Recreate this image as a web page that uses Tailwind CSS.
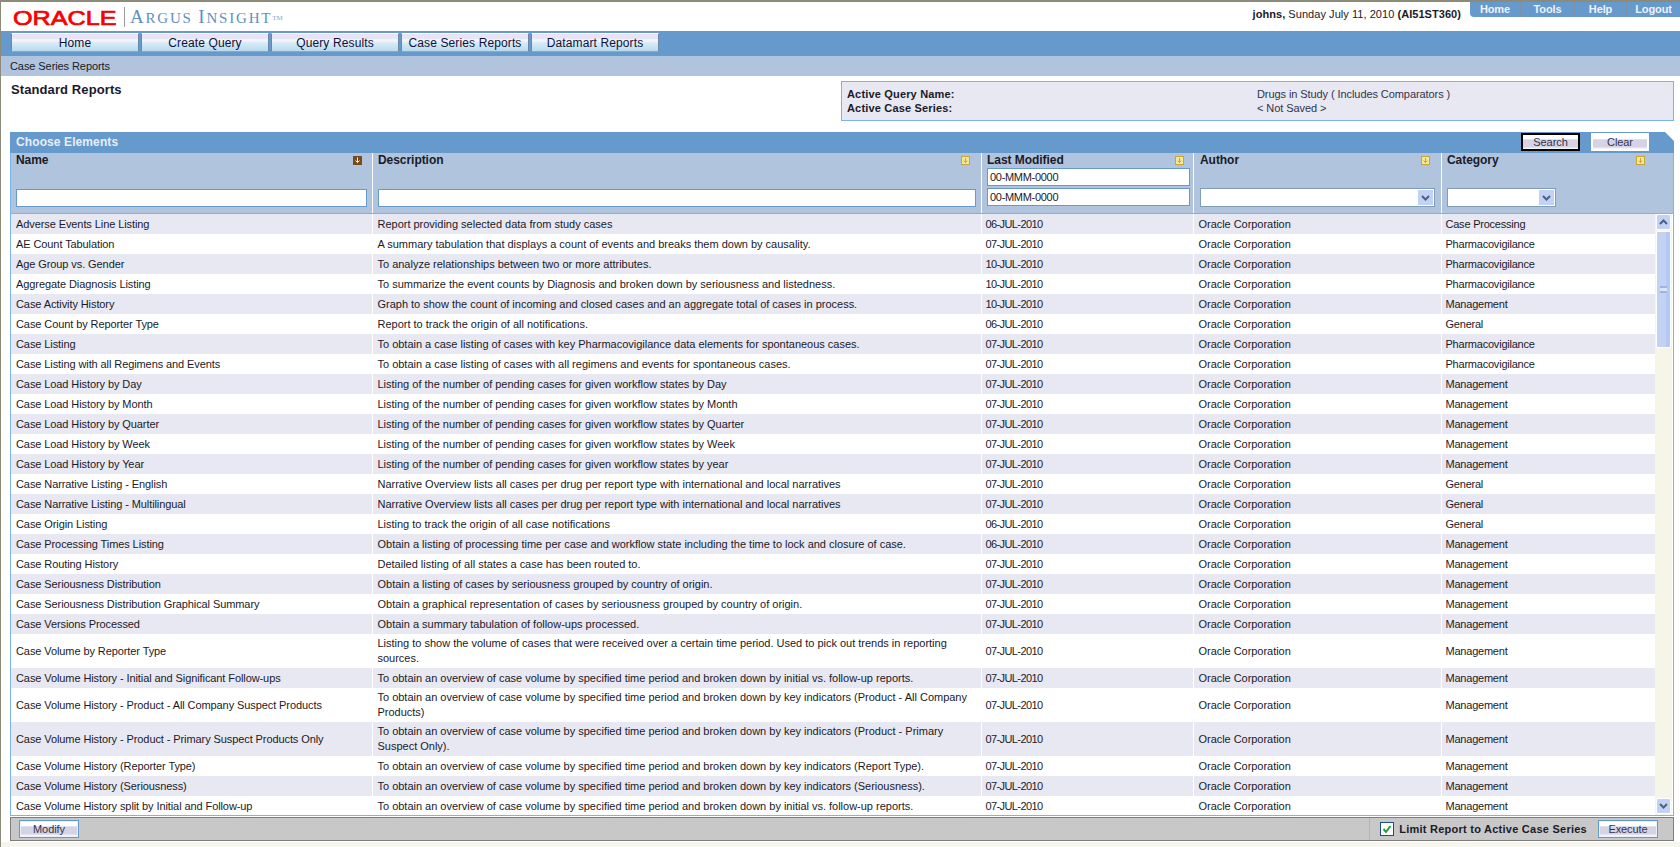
<!DOCTYPE html>
<html lang="en">
  <head>
    <meta charset="UTF-8" />
    <title>Argus Insight - Case Series Reports</title>
    <script src="https://cdn.jsdelivr.net/npm/@tailwindcss/browser@4"></script>
  </head>
  <body class="h-[847px] overflow-hidden bg-white border-t-2 border-l border-[#8c8a78] font-['Liberation_Sans',Arial,sans-serif] text-[11px] tracking-[-0.08px] text-[#1a1a28]">
    <!-- Header -->
    <div class="flex h-[29px] justify-between">
      <div class="flex items-start pl-[12px]">
        <span class="mt-[6px] w-[108px] origin-left scale-x-[1.26] text-[20px] leading-[20px] tracking-normal text-[#f80000] [-webkit-text-stroke:0.7px_#f80000]">ORACLE</span>
        <span class="mt-[5px] ml-[3px] h-[20px] w-px bg-[#9a9a9a]"></span>
        <span class="mt-[5px] ml-[5px] font-['Liberation_Serif',serif] text-[15px] leading-[20px] tracking-[1.8px] text-[#5f90c0]"><span class="text-[19px]">A</span>RGUS <span class="text-[19px]">I</span>NSIGHT<sup class="text-[7px] tracking-normal text-[#8aa8c8]">TM</sup></span>
      </div>
      <div class="flex items-start">
        <span class="mt-[5px] mr-[9px] text-[11px] leading-[14px] tracking-[0.05px]"><b>johns,</b> Sunday July 11, 2010 <b>(AI51ST360)</b></span>
        <div class="flex h-[15px] w-[210px] rounded-bl-[4px] bg-[#6699cc] text-[11px] leading-[14px] font-bold tracking-[-0.1px] text-[#eef3fa]">
          <a class="w-[51px] border-r border-[#7f8fa5] text-center">Home</a>
          <a class="w-[54px] border-r border-[#7f8fa5] text-center">Tools</a>
          <a class="w-[52px] border-r border-[#7f8fa5] text-center">Help</a>
          <a class="w-[53px] text-center">Logout</a>
        </div>
      </div>
    </div>

    <!-- Main navigation -->
    <nav class="flex h-[25px] items-start gap-[2px] bg-[#6699cc] pt-[2px] pl-[10px] text-[12px] tracking-[0.12px] text-[#10103a]">
      <a class="h-[19px] w-[128px] border border-x-[#6f86a6] border-t-white border-b-[#8fa8c0] bg-[linear-gradient(#e9e3f6_0,#e9e3f6_25%,#f6f8fb_35%,#d5eaf6_55%,#b9d9ee_100%)] text-center leading-[19px]">Home</a>
      <a class="h-[19px] w-[128px] border border-x-[#6f86a6] border-t-white border-b-[#8fa8c0] bg-[linear-gradient(#e9e3f6_0,#e9e3f6_25%,#f6f8fb_35%,#d5eaf6_55%,#b9d9ee_100%)] text-center leading-[19px]">Create Query</a>
      <a class="h-[19px] w-[128px] border border-x-[#6f86a6] border-t-white border-b-[#8fa8c0] bg-[linear-gradient(#e9e3f6_0,#e9e3f6_25%,#f6f8fb_35%,#d5eaf6_55%,#b9d9ee_100%)] text-center leading-[19px]">Query Results</a>
      <a class="h-[19px] w-[128px] border border-x-[#6f86a6] border-t-white border-b-[#8fa8c0] bg-[linear-gradient(#e9e3f6_0,#e9e3f6_25%,#f6f8fb_35%,#d5eaf6_55%,#b9d9ee_100%)] text-center leading-[19px]">Case Series Reports</a>
      <a class="h-[19px] w-[128px] border border-x-[#6f86a6] border-t-white border-b-[#8fa8c0] bg-[linear-gradient(#e9e3f6_0,#e9e3f6_25%,#f6f8fb_35%,#d5eaf6_55%,#b9d9ee_100%)] text-center leading-[19px]">Datamart Reports</a>
    </nav>
    <div class="h-[20px] bg-[#b0c4de] pl-[9px] leading-[20px]">Case Series Reports</div>

    <!-- Title and active query -->
    <div class="flex h-[56px] justify-between pt-[5px] pr-[6px] pl-[10px]">
      <h1 class="pt-[1px] text-[13px] leading-[16px] font-bold tracking-[0.1px]">Standard Reports</h1>
      <div class="flex h-[40px] w-[833px] border border-[#7ab2f2] bg-[#e8e8f2] pt-[5px] leading-[14px]">
        <div class="w-[415px] pl-[5px] text-[11px] font-bold tracking-[0.17px]">
          <p>Active Query Name:</p>
          <p>Active Case Series:</p>
        </div>
        <div class="text-[#33334a]">
          <p>Drugs in Study ( Includes Comparators )</p>
          <p>&lt; Not Saved &gt;</p>
        </div>
      </div>
    </div>

    <!-- Choose Elements panel -->
    <div class="mr-[6px] ml-[9px]">
      <div class="flex h-[21px] items-start justify-between bg-[#6699cc] pr-[25px] pl-[6px] [clip-path:polygon(0_0,calc(100%-9px)_0,100%_9px,100%_100%,0_100%)]">
        <span class="text-[12px] leading-[20px] font-bold tracking-[0.1px] text-[#e8eef8]">Choose Elements</span>
        <div class="mt-px flex gap-[11px]">
          <button class="h-[18px] w-[59px] border-2 border-black bg-[linear-gradient(#fff_0,#fff_25%,#d5d3e4_35%,#d5d3e4_85%,#fff_100%)] text-[11px] leading-[13px] text-[#333350]">Search</button>
          <button class="h-[18px] w-[58px] border-2 border-white bg-[linear-gradient(#fff_0,#fff_25%,#d5d3e4_35%,#d5d3e4_85%,#fff_100%)] text-[11px] leading-[13px] text-[#333350]">Clear</button>
        </div>
      </div>

      <!-- Column headers and filters -->
      <div class="flex h-[61px] border-x border-b border-[#7ab2f2] bg-[#b0c4de] text-[12px] leading-[15px] font-bold tracking-[-0.05px]">
        <div class="relative w-[362px] border-r border-white pl-[5px]">
          Name
          <svg class="absolute top-[3px] right-[10px] h-[9px] w-[9px]" viewBox="0 0 9 9"><rect width="9" height="9" fill="#7a4a1c" /><path d="M4.5 1.5v5M2.5 4.5l2 2 2-2" stroke="#fff" fill="none" /></svg>
          <input class="absolute top-[36px] left-[5px] h-[18px] w-[351px] border border-[#6699cc] bg-white" />
        </div>
        <div class="relative w-[609px] border-r border-white pl-[5px]">
          Description
          <svg class="absolute top-[3px] right-[11px] h-[9px] w-[9px]" viewBox="0 0 9 9"><rect x=".5" y=".5" width="8" height="8" fill="#f6e792" stroke="#c8a53a" /><path d="M4.5 2v4.5M2.7 4.7l1.8 1.8 1.8-1.8" stroke="#c8a53a" fill="none" /></svg>
          <input class="absolute top-[36px] left-[5px] h-[18px] w-[598px] border border-[#6699cc] bg-white" />
        </div>
        <div class="relative w-[212px] border-r border-white pl-[5px]">
          Last Modified
          <svg class="absolute top-[3px] right-[9px] h-[9px] w-[9px]" viewBox="0 0 9 9"><rect x=".5" y=".5" width="8" height="8" fill="#f6e792" stroke="#c8a53a" /><path d="M4.5 2v4.5M2.7 4.7l1.8 1.8 1.8-1.8" stroke="#c8a53a" fill="none" /></svg>
          <input value="00-MMM-0000" class="absolute top-[15px] left-[5px] h-[18px] w-[203px] border border-[#6699cc] bg-white pl-[2px] text-[11px] font-normal tracking-[-0.3px]" />
          <input value="00-MMM-0000" class="absolute top-[35px] left-[5px] h-[18px] w-[203px] border border-[#6699cc] bg-white pl-[2px] text-[11px] font-normal tracking-[-0.3px]" />
        </div>
        <div class="relative w-[248px] border-r border-white pl-[6px]">
          Author
          <svg class="absolute top-[3px] right-[11px] h-[9px] w-[9px]" viewBox="0 0 9 9"><rect x=".5" y=".5" width="8" height="8" fill="#f6e792" stroke="#c8a53a" /><path d="M4.5 2v4.5M2.7 4.7l1.8 1.8 1.8-1.8" stroke="#c8a53a" fill="none" /></svg>
          <div class="absolute top-[35px] left-[6px] flex h-[19px] w-[235px] justify-end border border-[#7f9db9] bg-white p-px">
            <span class="flex w-[15px] items-center justify-center bg-[#c1d2f5]"><svg class="h-[6px] w-[9px]" viewBox="0 0 9 6"><path d="M1 1l3.5 3.5L8 1" stroke="#4d6185" stroke-width="2" fill="none" /></svg></span>
          </div>
        </div>
        <div class="relative flex-1 pl-[5px]">
          Category
          <svg class="absolute top-[3px] right-[28px] h-[9px] w-[9px]" viewBox="0 0 9 9"><rect x=".5" y=".5" width="8" height="8" fill="#f6e792" stroke="#c8a53a" /><path d="M4.5 2v4.5M2.7 4.7l1.8 1.8 1.8-1.8" stroke="#c8a53a" fill="none" /></svg>
          <div class="absolute top-[35px] left-[5px] flex h-[19px] w-[109px] justify-end border border-[#7f9db9] bg-white p-px">
            <span class="flex w-[15px] items-center justify-center bg-[#c1d2f5]"><svg class="h-[6px] w-[9px]" viewBox="0 0 9 6"><path d="M1 1l3.5 3.5L8 1" stroke="#4d6185" stroke-width="2" fill="none" /></svg></span>
          </div>
        </div>
      </div>

      <!-- Report list -->
      <div class="flex h-[602px] overflow-hidden border-x border-b border-[#7ab2f2]">
        <table class="w-[1644px] table-fixed self-start leading-[15px] [&_td]:h-[20px] [&_td]:px-[5px] [&_td]:py-[2px] [&_td+td]:border-l [&_td+td]:border-white [&_td:nth-child(1)]:tracking-[-0.09px] [&_td:nth-child(2)]:tracking-[-0.01px] [&_td:nth-child(3)]:pl-[4px] [&_td:nth-child(3)]:tracking-[-0.6px] [&_td:nth-child(4)]:tracking-[-0.04px] [&_td:nth-child(5)]:pl-[4px] [&_td:nth-child(5)]:tracking-[-0.22px] [&_tr:nth-child(odd)]:bg-[#e8e8f2]">
          <colgroup>
            <col class="w-[361px]" />
            <col class="w-[609px]" />
            <col class="w-[212px]" />
            <col class="w-[248px]" />
            <col class="w-[214px]" />
          </colgroup>
          <tbody>
            <tr><td>Adverse Events Line Listing</td><td>Report providing selected data from study cases</td><td>06-JUL-2010</td><td>Oracle Corporation</td><td>Case Processing</td></tr>
            <tr><td>AE Count Tabulation</td><td>A summary tabulation that displays a count of events and breaks them down by causality.</td><td>07-JUL-2010</td><td>Oracle Corporation</td><td>Pharmacovigilance</td></tr>
            <tr><td>Age Group vs. Gender</td><td>To analyze relationships between two or more attributes.</td><td>10-JUL-2010</td><td>Oracle Corporation</td><td>Pharmacovigilance</td></tr>
            <tr><td>Aggregate Diagnosis Listing</td><td>To summarize the event counts by Diagnosis and broken down by seriousness and listedness.</td><td>10-JUL-2010</td><td>Oracle Corporation</td><td>Pharmacovigilance</td></tr>
            <tr><td>Case Activity History</td><td>Graph to show the count of incoming and closed cases and an aggregate total of cases in process.</td><td>10-JUL-2010</td><td>Oracle Corporation</td><td>Management</td></tr>
            <tr><td>Case Count by Reporter Type</td><td>Report to track the origin of all notifications.</td><td>06-JUL-2010</td><td>Oracle Corporation</td><td>General</td></tr>
            <tr><td>Case Listing</td><td>To obtain a case listing of cases with key Pharmacovigilance data elements for spontaneous cases.</td><td>07-JUL-2010</td><td>Oracle Corporation</td><td>Pharmacovigilance</td></tr>
            <tr><td>Case Listing with all Regimens and Events</td><td>To obtain a case listing of cases with all regimens and events for spontaneous cases.</td><td>07-JUL-2010</td><td>Oracle Corporation</td><td>Pharmacovigilance</td></tr>
            <tr><td>Case Load History by Day</td><td>Listing of the number of pending cases for given workflow states by Day</td><td>07-JUL-2010</td><td>Oracle Corporation</td><td>Management</td></tr>
            <tr><td>Case Load History by Month</td><td>Listing of the number of pending cases for given workflow states by Month</td><td>07-JUL-2010</td><td>Oracle Corporation</td><td>Management</td></tr>
            <tr><td>Case Load History by Quarter</td><td>Listing of the number of pending cases for given workflow states by Quarter</td><td>07-JUL-2010</td><td>Oracle Corporation</td><td>Management</td></tr>
            <tr><td>Case Load History by Week</td><td>Listing of the number of pending cases for given workflow states by Week</td><td>07-JUL-2010</td><td>Oracle Corporation</td><td>Management</td></tr>
            <tr><td>Case Load History by Year</td><td>Listing of the number of pending cases for given workflow states by year</td><td>07-JUL-2010</td><td>Oracle Corporation</td><td>Management</td></tr>
            <tr><td>Case Narrative Listing - English</td><td>Narrative Overview lists all cases per drug per report type with international and local narratives</td><td>07-JUL-2010</td><td>Oracle Corporation</td><td>General</td></tr>
            <tr><td>Case Narrative Listing - Multilingual</td><td>Narrative Overview lists all cases per drug per report type with international and local narratives</td><td>07-JUL-2010</td><td>Oracle Corporation</td><td>General</td></tr>
            <tr><td>Case Origin Listing</td><td>Listing to track the origin of all case notifications</td><td>06-JUL-2010</td><td>Oracle Corporation</td><td>General</td></tr>
            <tr><td>Case Processing Times Listing</td><td>Obtain a listing of processing time per case and workflow state including the time to lock and closure of case.</td><td>06-JUL-2010</td><td>Oracle Corporation</td><td>Management</td></tr>
            <tr><td>Case Routing History</td><td>Detailed listing of all states a case has been routed to.</td><td>07-JUL-2010</td><td>Oracle Corporation</td><td>Management</td></tr>
            <tr><td>Case Seriousness Distribution</td><td>Obtain a listing of cases by seriousness grouped by country of origin.</td><td>07-JUL-2010</td><td>Oracle Corporation</td><td>Management</td></tr>
            <tr><td>Case Seriousness Distribution Graphical Summary</td><td>Obtain a graphical representation of cases by seriousness grouped by country of origin.</td><td>07-JUL-2010</td><td>Oracle Corporation</td><td>Management</td></tr>
            <tr><td>Case Versions Processed</td><td>Obtain a summary tabulation of follow-ups processed.</td><td>07-JUL-2010</td><td>Oracle Corporation</td><td>Management</td></tr>
            <tr><td>Case Volume by Reporter Type</td><td>Listing to show the volume of cases that were received over a certain time period. Used to pick out trends in reporting sources.</td><td>07-JUL-2010</td><td>Oracle Corporation</td><td>Management</td></tr>
            <tr><td>Case Volume History - Initial and Significant Follow-ups</td><td>To obtain an overview of case volume by specified time period and broken down by initial vs. follow-up reports.</td><td>07-JUL-2010</td><td>Oracle Corporation</td><td>Management</td></tr>
            <tr><td>Case Volume History - Product - All Company Suspect Products</td><td>To obtain an overview of case volume by specified time period and broken down by key indicators (Product - All Company Products)</td><td>07-JUL-2010</td><td>Oracle Corporation</td><td>Management</td></tr>
            <tr><td>Case Volume History - Product - Primary Suspect Products Only</td><td>To obtain an overview of case volume by specified time period and broken down by key indicators (Product - Primary Suspect Only).</td><td>07-JUL-2010</td><td>Oracle Corporation</td><td>Management</td></tr>
            <tr><td>Case Volume History (Reporter Type)</td><td>To obtain an overview of case volume by specified time period and broken down by key indicators (Report Type).</td><td>07-JUL-2010</td><td>Oracle Corporation</td><td>Management</td></tr>
            <tr><td>Case Volume History (Seriousness)</td><td>To obtain an overview of case volume by specified time period and broken down by key indicators (Seriousness).</td><td>07-JUL-2010</td><td>Oracle Corporation</td><td>Management</td></tr>
            <tr><td>Case Volume History split by Initial and Follow-up</td><td>To obtain an overview of case volume by specified time period and broken down by initial vs. follow-up reports.</td><td>07-JUL-2010</td><td>Oracle Corporation</td><td>Management</td></tr>
          </tbody>
        </table>
        <!-- Scrollbar -->
        <div class="flex w-[17px] flex-col justify-between bg-[#f6f6e8] px-px">
          <div>
            <div class="flex h-[16px] items-center justify-center rounded-[2px] border border-white bg-[#c1d2f5]"><svg class="h-[6px] w-[9px]" viewBox="0 0 9 6"><path d="M1 5l3.5-3.5L8 5" stroke="#4d6185" stroke-width="2" fill="none" /></svg></div>
            <div class="mt-px flex h-[117px] items-center justify-center rounded-[2px] border border-white bg-[linear-gradient(90deg,#c1d2f5_70%,#b3c8f2_70%)]"><div class="h-[7px] w-[7px] border-y-2 border-[#9fb4e0] bg-[#dbe5fa]"></div></div>
          </div>
          <div class="mb-[1px] flex h-[16px] items-center justify-center rounded-[2px] border border-white bg-[#c1d2f5]"><svg class="h-[6px] w-[9px]" viewBox="0 0 9 6"><path d="M1 1l3.5 3.5L8 1" stroke="#4d6185" stroke-width="2" fill="none" /></svg></div>
        </div>
      </div>

      <!-- Bottom action bar -->
      <div class="mt-px flex h-[24px] items-center justify-between border border-[#7d7d7d] bg-[#c8c8c8] pr-[15px] pl-[8px]">
        <button class="h-[18px] w-[60px] border-2 border-[#e8f0fb] bg-[linear-gradient(#fff_0,#fff_25%,#d5d3e4_35%,#d5d3e4_85%,#fff_100%)] text-[11px] leading-[13px] text-[#333350] outline outline-[#6699cc] -outline-offset-1">Modify</button>
        <div class="flex h-full items-center border-l border-[#a9b9b0] pl-[10px]">
          <span class="flex h-[14px] w-[14px] items-center justify-center border border-[#1f4f7f] bg-white"><svg class="h-[10px] w-[10px]" viewBox="0 0 10 10"><path d="M1.5 5l2.5 3 4.5-6" stroke="#21a038" stroke-width="2" fill="none" /></svg></span>
          <span class="mr-[11px] ml-[5px] text-[11px] font-bold tracking-[0.25px]">Limit Report to Active Case Series</span>
          <button class="h-[18px] w-[60px] border-2 border-[#e8f0fb] bg-[linear-gradient(#fff_0,#fff_25%,#d5d3e4_35%,#d5d3e4_85%,#fff_100%)] text-[11px] leading-[13px] text-[#333350] outline outline-[#6699cc] -outline-offset-1">Execute</button>
        </div>
      </div>
    </div>
    <div class="mt-px h-[8px] bg-[#f6f6ee]"></div>
  </body>
</html>
